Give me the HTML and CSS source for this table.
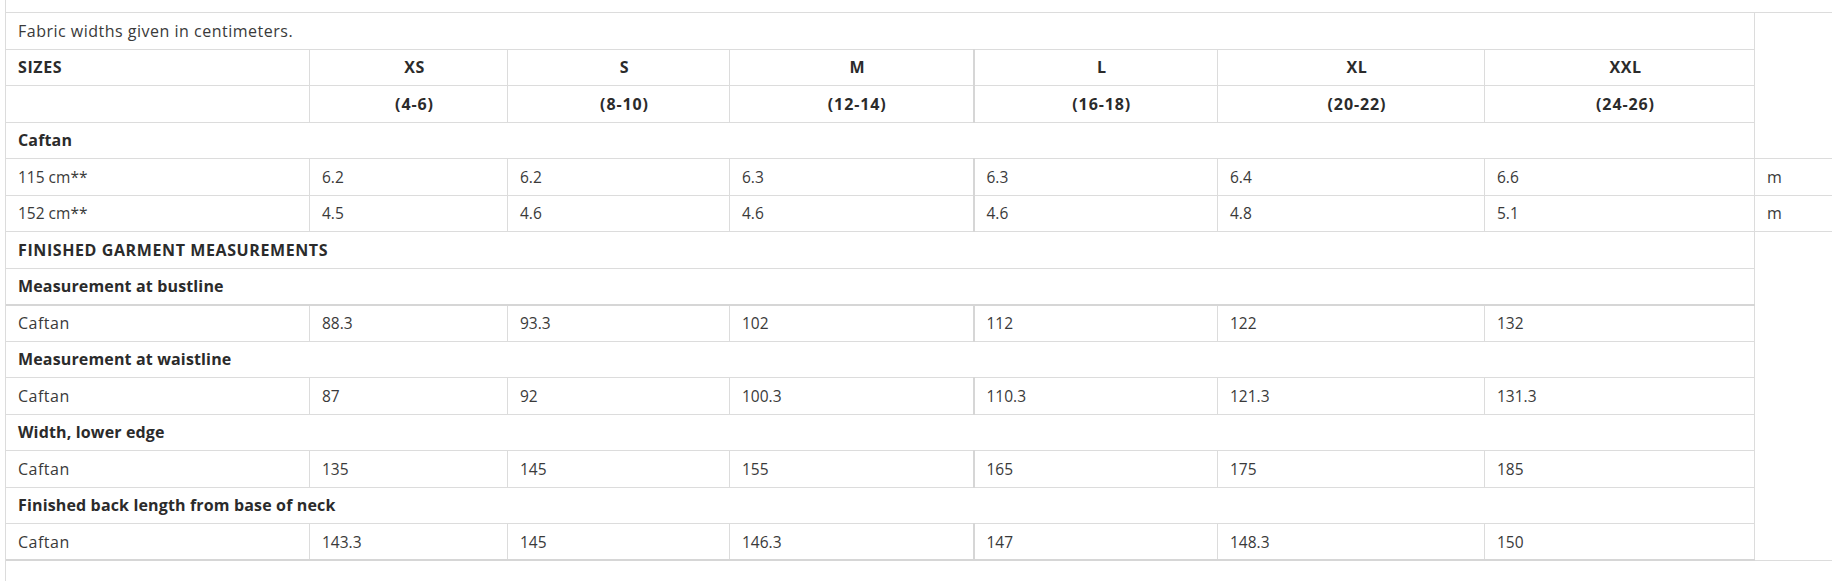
FILE: index.html
```html
<!DOCTYPE html>
<html lang="en">
<head>
<meta charset="utf-8">
<title>Caftan size chart</title>
<link rel="stylesheet" href="styles.css">
</head>
<body>
<div class="page">
  <table class="sizes">
    <colgroup>
      <col class="c-label">
      <col class="c-xs">
      <col class="c-s">
      <col class="c-m">
      <col class="c-l">
      <col class="c-xl">
      <col class="c-xxl">
      <col class="c-unit">
    </colgroup>
    <tbody>
      <tr>
        <td colspan="7" class="word">Fabric widths given in centimeters.</td>
        <td rowspan="4"></td>
      </tr>
      <tr class="head">
        <td class="caps">SIZES</td>
        <td class="ctr caps">XS</td>
        <td class="ctr caps">S</td>
        <td class="ctr caps">M</td>
        <td class="ctr caps col-l">L</td>
        <td class="ctr caps">XL</td>
        <td class="ctr caps">XXL</td>
      </tr>
      <tr class="head">
        <td></td>
        <td class="ctr range">(4-6)</td>
        <td class="ctr range">(8-10)</td>
        <td class="ctr range">(12-14)</td>
        <td class="ctr range col-l">(16-18)</td>
        <td class="ctr range">(20-22)</td>
        <td class="ctr range">(24-26)</td>
      </tr>
      <tr class="sect">
        <td colspan="7" class="word">Caftan</td>
      </tr>
      <tr>
        <td>115 cm**</td>
        <td>6.2</td><td>6.2</td><td>6.3</td><td class="col-l">6.3</td><td>6.4</td><td>6.6</td>
        <td class="word">m</td>
      </tr>
      <tr>
        <td>152 cm**</td>
        <td>4.5</td><td>4.6</td><td>4.6</td><td class="col-l">4.6</td><td>4.8</td><td>5.1</td>
        <td class="word">m</td>
      </tr>
      <tr class="sect">
        <td colspan="7" class="caps">FINISHED GARMENT MEASUREMENTS</td>
        <td rowspan="9"></td>
      </tr>
      <tr class="sect">
        <td colspan="7" class="word">Measurement at bustline</td>
      </tr>
      <tr class="thick">
        <td class="word">Caftan</td>
        <td>88.3</td><td>93.3</td><td>102</td><td class="col-l">112</td><td>122</td><td>132</td>
      </tr>
      <tr class="sect">
        <td colspan="7" class="word">Measurement at waistline</td>
      </tr>
      <tr>
        <td class="word">Caftan</td>
        <td>87</td><td>92</td><td>100.3</td><td class="col-l">110.3</td><td>121.3</td><td>131.3</td>
      </tr>
      <tr class="sect">
        <td colspan="7" class="word">Width, lower edge</td>
      </tr>
      <tr>
        <td class="word">Caftan</td>
        <td>135</td><td>145</td><td>155</td><td class="col-l">165</td><td>175</td><td>185</td>
      </tr>
      <tr class="sect">
        <td colspan="7" class="word">Finished back length from base of neck</td>
      </tr>
      <tr class="last">
        <td class="word">Caftan</td>
        <td>143.3</td><td>145</td><td>146.3</td><td class="col-l">147</td><td>148.3</td><td>150</td>
      </tr>
    </tbody>
  </table>
</div>
</body>
</html>
```

FILE: styles.css
```css
html, body {
  margin: 0;
  padding: 0;
  background: #ffffff;
}

body {
  font-family: "Open Sans", "Noto Sans", sans-serif;
  color: #3a3a3a;
  overflow: hidden;
}

.page {
  margin-left: 5px;
  border-left: 1px solid #dcdcdc;
  padding-top: 12px;
  height: 581px;
  box-sizing: border-box;
  overflow: hidden;
}

.sizes {
  border-collapse: collapse;
  table-layout: fixed;
  width: 1849px;
  margin-left: -1px;
  font-size: 15.5px;
}

.c-label { width: 304px; }
.c-xs { width: 198px; }
.c-s { width: 222px; }
.c-m { width: 244px; }
.c-l { width: 244px; }
.c-xl { width: 267px; }
.c-xxl { width: 270px; }
.c-unit { width: 100px; }

.sizes tr {
  height: 36.5px;
}

.sizes td {
  border: 1px solid #dcdcdc;
  padding: 0 0 0 12px;
  vertical-align: middle;
  white-space: nowrap;
  line-height: 20px;
}

.sizes td.word {
  font-size: 16px;
  letter-spacing: 0.5px;
}

.sizes td.caps {
  font-size: 16px;
  letter-spacing: 0.6px;
}

.sizes td.range {
  font-size: 16px;
  letter-spacing: 0.9px;
}

.sizes td.ctr {
  text-align: center;
}

.sizes .head td,
.sizes .sect td {
  font-weight: 700;
  color: #2b2b2b;
}

.sizes .sect td.word {
  letter-spacing: 0.15px;
}

.sizes td.col-l {
  border-left: 2px solid #d6d6d6;
}

.sizes tr.thick td {
  border-top: 2px solid #d6d6d6;
}

.sizes tr.last td {
  border-bottom: 2px solid #d6d6d6;
}
```
